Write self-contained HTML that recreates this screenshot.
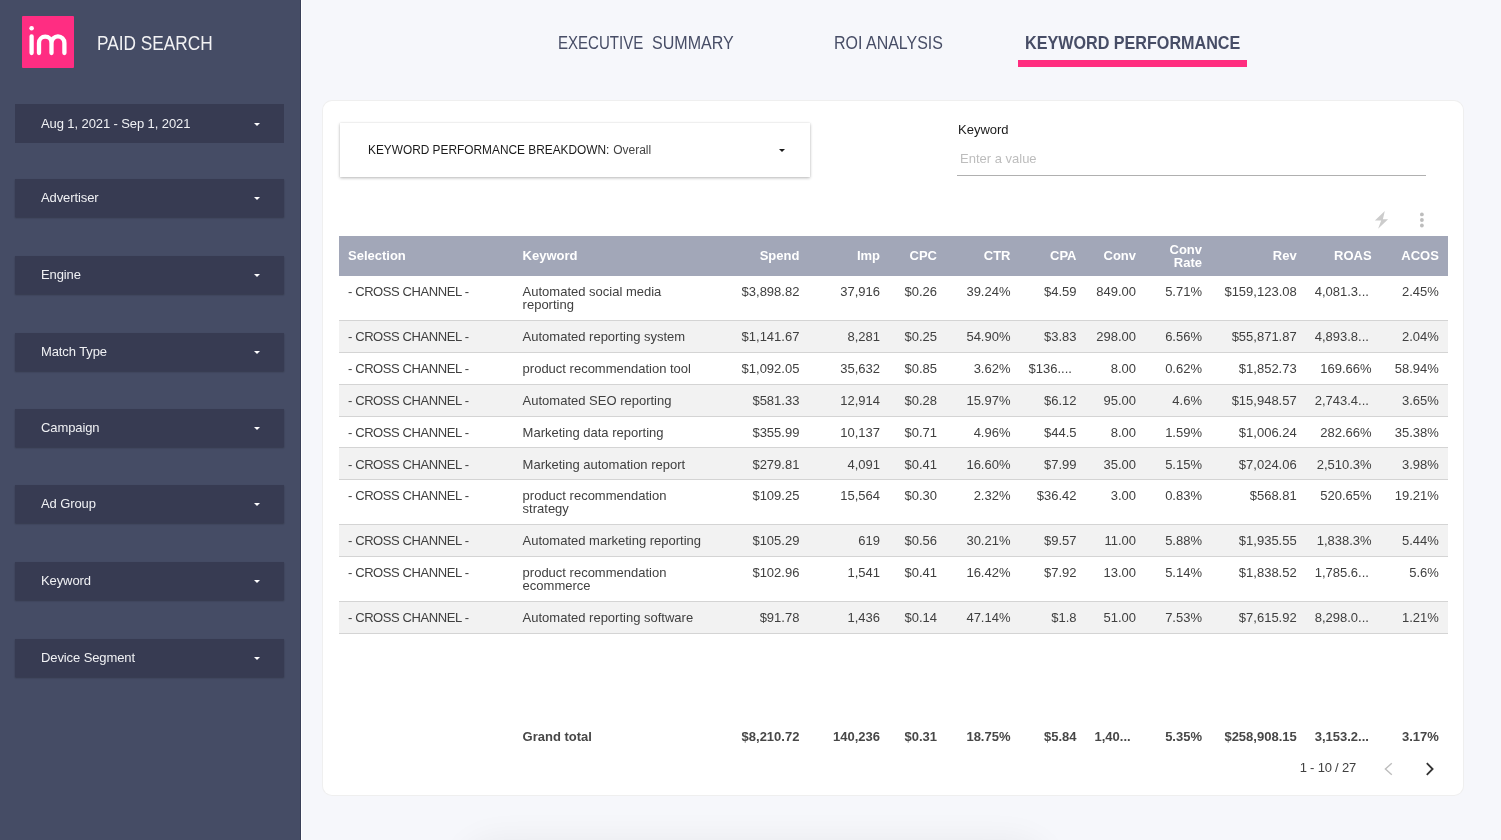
<!DOCTYPE html>
<html><head><meta charset="utf-8">
<style>
*{box-sizing:border-box;margin:0;padding:0}
html,body{width:1501px;height:840px;overflow:hidden;background:#f6f7fb;font-family:"Liberation Sans",sans-serif;position:relative}
.abs{position:absolute}
#root{position:absolute;left:0;top:0;width:1501px;height:840px;will-change:transform}
#side{left:0;top:0;width:301px;height:840px;background:#454c65;border-right:1px solid #3a4058}
#sideline{left:301px;top:0;width:1px;height:840px;background:#ffffff}
.logo{left:22px;top:16px;width:52px;height:52px;background:#ff2d82;border-radius:1px}
.brand{left:96.5px;top:33.2px;font-size:20px;line-height:20px;color:#f2f2f4;white-space:nowrap;transform:scaleX(0.862);transform-origin:0 0}
.dd{left:15px;width:269px;height:38.2px;background:#373b52;box-shadow:0 1px 1.5px rgba(0,0,0,.26)}
.dd span{position:absolute;left:26px;top:12px;font-size:13px;line-height:13px;color:#f0f1f4;white-space:nowrap;letter-spacing:-0.1px}
.dd i{position:absolute;left:239px;top:17.5px;width:0;height:0;border-left:3px solid transparent;border-right:3px solid transparent;border-top:3.2px solid #fff}
.tab{top:33.7px;font-size:18px;line-height:18px;color:#474d66;white-space:nowrap;transform-origin:0 0}
#ul{left:1018px;top:60px;width:229px;height:7px;background:#ff2d7f}
#card{left:323px;top:101px;width:1140px;height:693.5px;background:#fff;border-radius:9px;box-shadow:0 0 0 1px #efefef}
#bd{left:340px;top:123px;width:470px;height:54px;background:#fff;box-shadow:0 1px 3px rgba(0,0,0,.28),0 0 1px rgba(0,0,0,.1)}
#bd .t{position:absolute;left:27.6px;top:19.8px;font-size:13px;line-height:13px;color:#1a1a1a;white-space:nowrap;transform:scaleX(0.913);transform-origin:0 0}
#bd .o{position:absolute;left:273.2px;top:20.6px;font-size:12px;line-height:12px;color:#444;white-space:nowrap}
#bd i{position:absolute;left:438.6px;top:25.6px;width:0;height:0;border-left:3.2px solid transparent;border-right:3.2px solid transparent;border-top:3.4px solid #1a1a1a}

.c{position:absolute;font-size:13px;line-height:13px;white-space:nowrap;color:#404040}
.c.h{color:#fff;font-weight:bold}
.c.b{font-weight:bold;color:#474747}
.c.r{text-align:right}
#kwl{left:958px;top:122.5px;font-size:13px;line-height:13px;color:#1a1a1a}
#kwp{left:960px;top:151.5px;font-size:13px;line-height:13px;color:#bdbdbd}
#kwu{left:957px;top:175px;width:469px;height:1px;background:#b0b0b0}
#pg{right:145px;top:760.9px;font-size:13px;line-height:13px;color:#404040;white-space:nowrap;letter-spacing:-0.2px}
#shadow{left:468px;top:848px;width:574px;height:60px;border-radius:30px;background:#eee;box-shadow:0 0 34px 8px rgba(0,0,0,.06)}
</style></head><body><div id="root">
<div id="side" class="abs"></div>
<div id="sideline" class="abs"></div>
<div class="abs logo"><svg width="52" height="52" viewBox="22 16 52 52" style="display:block">
<circle cx="31.6" cy="28.3" r="2.3" fill="#fff"/>
<path d="M31.6 36.3V53M39 53V42.9A6.25 6.25 0 0 1 51.5 42.9V53M51.5 42.9A6.45 6.45 0 0 1 64.4 42.9V53" fill="none" stroke="#fff" stroke-width="4.3" stroke-linecap="round"/>
</svg></div>
<div class="abs brand">PAID SEARCH</div>

<div class="abs dd" style="top:104px;height:38.9px;box-shadow:none"><span style="top:13.1px">Aug 1, 2021 - Sep 1, 2021</span><i style="top:18.5px"></i></div>
<div class="abs dd" style="top:179.2px"><span>Advertiser</span><i></i></div>
<div class="abs dd" style="top:256.2px"><span>Engine</span><i></i></div>
<div class="abs dd" style="top:333.2px"><span>Match Type</span><i></i></div>
<div class="abs dd" style="top:409px"><span>Campaign</span><i></i></div>
<div class="abs dd" style="top:485px"><span>Ad Group</span><i></i></div>
<div class="abs dd" style="top:562px"><span>Keyword</span><i></i></div>
<div class="abs dd" style="top:639px"><span>Device Segment</span><i></i></div>

<div class="abs tab" style="left:557.9px;transform:scaleX(0.836)">EXECUTIVE</div><div class="abs tab" style="left:652px;transform:scaleX(0.892)">SUMMARY</div>
<div class="abs tab" style="left:834px;transform:scaleX(0.888)">ROI ANALYSIS</div>
<div class="abs tab" style="left:1024.5px;font-weight:bold;transform:scaleX(0.897)">KEYWORD PERFORMANCE</div>
<div id="ul" class="abs"></div>

<div id="card" class="abs"></div>
<div id="bd" class="abs"><div class="t">KEYWORD PERFORMANCE BREAKDOWN:</div><div class="o">Overall</div><i></i></div>


<div id="kwl" class="abs">Keyword</div>
<div id="kwp" class="abs">Enter a value</div>
<div id="kwu" class="abs"></div>
<svg class="abs" style="left:1370px;top:206px" width="60" height="28" viewBox="1370 206 60 28">
<polygon points="1384.8,210.9 1374.9,220.5 1381.2,220.5 1378.1,228.8 1388.1,219.2 1382.9,219.2" fill="#cccccc"/>
<circle cx="1421.9" cy="214.4" r="1.9" fill="#bdbdbd"/><circle cx="1421.9" cy="220" r="1.9" fill="#bdbdbd"/><circle cx="1421.9" cy="225.5" r="1.9" fill="#bdbdbd"/>
</svg>
<div class="abs" style="left:339px;top:236px;width:1108.8px;height:39.6px;background:#a2a7b8"></div>
<div class="c h" style="left:348.0px;top:248.8px">Selection</div>
<div class="c h" style="left:522.6px;top:248.8px">Keyword</div>
<div class="c r h" style="right:701.6px;top:248.8px">Spend</div>
<div class="c r h" style="right:621.0px;top:248.8px">Imp</div>
<div class="c r h" style="right:564.0px;top:248.8px">CPC</div>
<div class="c r h" style="right:490.5px;top:248.8px">CTR</div>
<div class="c r h" style="right:424.5px;top:248.8px">CPA</div>
<div class="c r h" style="right:365.0px;top:248.8px">Conv</div>
<div class="c r h" style="right:299.0px;top:242.9px">Conv<br>Rate</div>
<div class="c r h" style="right:204.3px;top:248.8px">Rev</div>
<div class="c r h" style="right:129.4px;top:248.8px">ROAS</div>
<div class="c r h" style="right:62.2px;top:248.8px">ACOS</div>
<div class="abs" style="left:339px;top:319.7px;width:1108.8px;height:1px;background:#d4d4d4"></div>
<div class="abs" style="left:339px;top:320.7px;width:1108.8px;height:32.0px;background:#f2f2f2"></div>
<div class="abs" style="left:339px;top:351.7px;width:1108.8px;height:1px;background:#d4d4d4"></div>
<div class="abs" style="left:339px;top:383.7px;width:1108.8px;height:1px;background:#d4d4d4"></div>
<div class="abs" style="left:339px;top:384.7px;width:1108.8px;height:31.8px;background:#f2f2f2"></div>
<div class="abs" style="left:339px;top:415.5px;width:1108.8px;height:1px;background:#d4d4d4"></div>
<div class="abs" style="left:339px;top:447.4px;width:1108.8px;height:1px;background:#d4d4d4"></div>
<div class="abs" style="left:339px;top:448.4px;width:1108.8px;height:31.7px;background:#f2f2f2"></div>
<div class="abs" style="left:339px;top:479.1px;width:1108.8px;height:1px;background:#d4d4d4"></div>
<div class="abs" style="left:339px;top:524.1px;width:1108.8px;height:1px;background:#d4d4d4"></div>
<div class="abs" style="left:339px;top:525.1px;width:1108.8px;height:31.8px;background:#f2f2f2"></div>
<div class="abs" style="left:339px;top:555.9px;width:1108.8px;height:1px;background:#d4d4d4"></div>
<div class="abs" style="left:339px;top:600.6px;width:1108.8px;height:1px;background:#d4d4d4"></div>
<div class="abs" style="left:339px;top:601.6px;width:1108.8px;height:32.2px;background:#f2f2f2"></div>
<div class="abs" style="left:339px;top:632.8px;width:1108.8px;height:1px;background:#d4d4d4"></div>
<div class="c " style="left:348.0px;top:285.2px;letter-spacing:-0.4px">- CROSS CHANNEL -</div>
<div class="c " style="left:522.6px;top:285.2px">Automated social media<br>reporting</div>
<div class="c r " style="right:701.6px;top:285.2px">$3,898.82</div>
<div class="c r " style="right:621.0px;top:285.2px">37,916</div>
<div class="c r " style="right:564.0px;top:285.2px">$0.26</div>
<div class="c r " style="right:490.5px;top:285.2px">39.24%</div>
<div class="c r " style="right:424.5px;top:285.2px">$4.59</div>
<div class="c r " style="right:365.0px;top:285.2px">849.00</div>
<div class="c r " style="right:299.0px;top:285.2px">5.71%</div>
<div class="c r " style="right:204.3px;top:285.2px">$159,123.08</div>
<div class="c " style="left:1314.7px;top:285.2px">4,081.3...</div>
<div class="c r " style="right:62.2px;top:285.2px">2.45%</div>
<div class="c " style="left:348.0px;top:329.8px;letter-spacing:-0.4px">- CROSS CHANNEL -</div>
<div class="c " style="left:522.6px;top:329.8px">Automated reporting system</div>
<div class="c r " style="right:701.6px;top:329.8px">$1,141.67</div>
<div class="c r " style="right:621.0px;top:329.8px">8,281</div>
<div class="c r " style="right:564.0px;top:329.8px">$0.25</div>
<div class="c r " style="right:490.5px;top:329.8px">54.90%</div>
<div class="c r " style="right:424.5px;top:329.8px">$3.83</div>
<div class="c r " style="right:365.0px;top:329.8px">298.00</div>
<div class="c r " style="right:299.0px;top:329.8px">6.56%</div>
<div class="c r " style="right:204.3px;top:329.8px">$55,871.87</div>
<div class="c " style="left:1314.7px;top:329.8px">4,893.8...</div>
<div class="c r " style="right:62.2px;top:329.8px">2.04%</div>
<div class="c " style="left:348.0px;top:361.8px;letter-spacing:-0.4px">- CROSS CHANNEL -</div>
<div class="c " style="left:522.6px;top:361.8px">product recommendation tool</div>
<div class="c r " style="right:701.6px;top:361.8px">$1,092.05</div>
<div class="c r " style="right:621.0px;top:361.8px">35,632</div>
<div class="c r " style="right:564.0px;top:361.8px">$0.85</div>
<div class="c r " style="right:490.5px;top:361.8px">3.62%</div>
<div class="c " style="left:1028.5px;top:361.8px">$136....</div>
<div class="c r " style="right:365.0px;top:361.8px">8.00</div>
<div class="c r " style="right:299.0px;top:361.8px">0.62%</div>
<div class="c r " style="right:204.3px;top:361.8px">$1,852.73</div>
<div class="c r " style="right:129.4px;top:361.8px">169.66%</div>
<div class="c r " style="right:62.2px;top:361.8px">58.94%</div>
<div class="c " style="left:348.0px;top:393.8px;letter-spacing:-0.4px">- CROSS CHANNEL -</div>
<div class="c " style="left:522.6px;top:393.8px">Automated SEO reporting</div>
<div class="c r " style="right:701.6px;top:393.8px">$581.33</div>
<div class="c r " style="right:621.0px;top:393.8px">12,914</div>
<div class="c r " style="right:564.0px;top:393.8px">$0.28</div>
<div class="c r " style="right:490.5px;top:393.8px">15.97%</div>
<div class="c r " style="right:424.5px;top:393.8px">$6.12</div>
<div class="c r " style="right:365.0px;top:393.8px">95.00</div>
<div class="c r " style="right:299.0px;top:393.8px">4.6%</div>
<div class="c r " style="right:204.3px;top:393.8px">$15,948.57</div>
<div class="c " style="left:1314.7px;top:393.8px">2,743.4...</div>
<div class="c r " style="right:62.2px;top:393.8px">3.65%</div>
<div class="c " style="left:348.0px;top:425.6px;letter-spacing:-0.4px">- CROSS CHANNEL -</div>
<div class="c " style="left:522.6px;top:425.6px">Marketing data reporting</div>
<div class="c r " style="right:701.6px;top:425.6px">$355.99</div>
<div class="c r " style="right:621.0px;top:425.6px">10,137</div>
<div class="c r " style="right:564.0px;top:425.6px">$0.71</div>
<div class="c r " style="right:490.5px;top:425.6px">4.96%</div>
<div class="c r " style="right:424.5px;top:425.6px">$44.5</div>
<div class="c r " style="right:365.0px;top:425.6px">8.00</div>
<div class="c r " style="right:299.0px;top:425.6px">1.59%</div>
<div class="c r " style="right:204.3px;top:425.6px">$1,006.24</div>
<div class="c r " style="right:129.4px;top:425.6px">282.66%</div>
<div class="c r " style="right:62.2px;top:425.6px">35.38%</div>
<div class="c " style="left:348.0px;top:457.5px;letter-spacing:-0.4px">- CROSS CHANNEL -</div>
<div class="c " style="left:522.6px;top:457.5px">Marketing automation report</div>
<div class="c r " style="right:701.6px;top:457.5px">$279.81</div>
<div class="c r " style="right:621.0px;top:457.5px">4,091</div>
<div class="c r " style="right:564.0px;top:457.5px">$0.41</div>
<div class="c r " style="right:490.5px;top:457.5px">16.60%</div>
<div class="c r " style="right:424.5px;top:457.5px">$7.99</div>
<div class="c r " style="right:365.0px;top:457.5px">35.00</div>
<div class="c r " style="right:299.0px;top:457.5px">5.15%</div>
<div class="c r " style="right:204.3px;top:457.5px">$7,024.06</div>
<div class="c r " style="right:129.4px;top:457.5px">2,510.3%</div>
<div class="c r " style="right:62.2px;top:457.5px">3.98%</div>
<div class="c " style="left:348.0px;top:489.2px;letter-spacing:-0.4px">- CROSS CHANNEL -</div>
<div class="c " style="left:522.6px;top:489.2px">product recommendation<br>strategy</div>
<div class="c r " style="right:701.6px;top:489.2px">$109.25</div>
<div class="c r " style="right:621.0px;top:489.2px">15,564</div>
<div class="c r " style="right:564.0px;top:489.2px">$0.30</div>
<div class="c r " style="right:490.5px;top:489.2px">2.32%</div>
<div class="c r " style="right:424.5px;top:489.2px">$36.42</div>
<div class="c r " style="right:365.0px;top:489.2px">3.00</div>
<div class="c r " style="right:299.0px;top:489.2px">0.83%</div>
<div class="c r " style="right:204.3px;top:489.2px">$568.81</div>
<div class="c r " style="right:129.4px;top:489.2px">520.65%</div>
<div class="c r " style="right:62.2px;top:489.2px">19.21%</div>
<div class="c " style="left:348.0px;top:534.2px;letter-spacing:-0.4px">- CROSS CHANNEL -</div>
<div class="c " style="left:522.6px;top:534.2px">Automated marketing reporting</div>
<div class="c r " style="right:701.6px;top:534.2px">$105.29</div>
<div class="c r " style="right:621.0px;top:534.2px">619</div>
<div class="c r " style="right:564.0px;top:534.2px">$0.56</div>
<div class="c r " style="right:490.5px;top:534.2px">30.21%</div>
<div class="c r " style="right:424.5px;top:534.2px">$9.57</div>
<div class="c r " style="right:365.0px;top:534.2px">11.00</div>
<div class="c r " style="right:299.0px;top:534.2px">5.88%</div>
<div class="c r " style="right:204.3px;top:534.2px">$1,935.55</div>
<div class="c r " style="right:129.4px;top:534.2px">1,838.3%</div>
<div class="c r " style="right:62.2px;top:534.2px">5.44%</div>
<div class="c " style="left:348.0px;top:566.0px;letter-spacing:-0.4px">- CROSS CHANNEL -</div>
<div class="c " style="left:522.6px;top:566.0px">product recommendation<br>ecommerce</div>
<div class="c r " style="right:701.6px;top:566.0px">$102.96</div>
<div class="c r " style="right:621.0px;top:566.0px">1,541</div>
<div class="c r " style="right:564.0px;top:566.0px">$0.41</div>
<div class="c r " style="right:490.5px;top:566.0px">16.42%</div>
<div class="c r " style="right:424.5px;top:566.0px">$7.92</div>
<div class="c r " style="right:365.0px;top:566.0px">13.00</div>
<div class="c r " style="right:299.0px;top:566.0px">5.14%</div>
<div class="c r " style="right:204.3px;top:566.0px">$1,838.52</div>
<div class="c " style="left:1314.7px;top:566.0px">1,785.6...</div>
<div class="c r " style="right:62.2px;top:566.0px">5.6%</div>
<div class="c " style="left:348.0px;top:610.7px;letter-spacing:-0.4px">- CROSS CHANNEL -</div>
<div class="c " style="left:522.6px;top:610.7px">Automated reporting software</div>
<div class="c r " style="right:701.6px;top:610.7px">$91.78</div>
<div class="c r " style="right:621.0px;top:610.7px">1,436</div>
<div class="c r " style="right:564.0px;top:610.7px">$0.14</div>
<div class="c r " style="right:490.5px;top:610.7px">47.14%</div>
<div class="c r " style="right:424.5px;top:610.7px">$1.8</div>
<div class="c r " style="right:365.0px;top:610.7px">51.00</div>
<div class="c r " style="right:299.0px;top:610.7px">7.53%</div>
<div class="c r " style="right:204.3px;top:610.7px">$7,615.92</div>
<div class="c " style="left:1314.7px;top:610.7px">8,298.0...</div>
<div class="c r " style="right:62.2px;top:610.7px">1.21%</div>
<div class="c b" style="left:522.6px;top:729.6px">Grand total</div>
<div class="c r b" style="right:701.6px;top:729.6px">$8,210.72</div>
<div class="c r b" style="right:621.0px;top:729.6px">140,236</div>
<div class="c r b" style="right:564.0px;top:729.6px">$0.31</div>
<div class="c r b" style="right:490.5px;top:729.6px">18.75%</div>
<div class="c r b" style="right:424.5px;top:729.6px">$5.84</div>
<div class="c b" style="left:1094.5px;top:729.6px">1,40...</div>
<div class="c r b" style="right:299.0px;top:729.6px">5.35%</div>
<div class="c r b" style="right:204.3px;top:729.6px">$258,908.15</div>
<div class="c b" style="left:1314.7px;top:729.6px">3,153.2...</div>
<div class="c r b" style="right:62.2px;top:729.6px">3.17%</div>
<div id="pg" class="abs">1 - 10 / 27</div>
<svg class="abs" style="left:1378px;top:756px" width="64" height="26" viewBox="1378 756 64 26">
<path d="M1391.8 763.2L1385.4 769L1391.8 774.8" fill="none" stroke="#bdbdbd" stroke-width="1.4"/>
<path d="M1426.8 763.2L1432.6 769L1426.8 774.8" fill="none" stroke="#333" stroke-width="1.8"/>
</svg>
<div id="shadow" class="abs"></div>
</div></body></html>
